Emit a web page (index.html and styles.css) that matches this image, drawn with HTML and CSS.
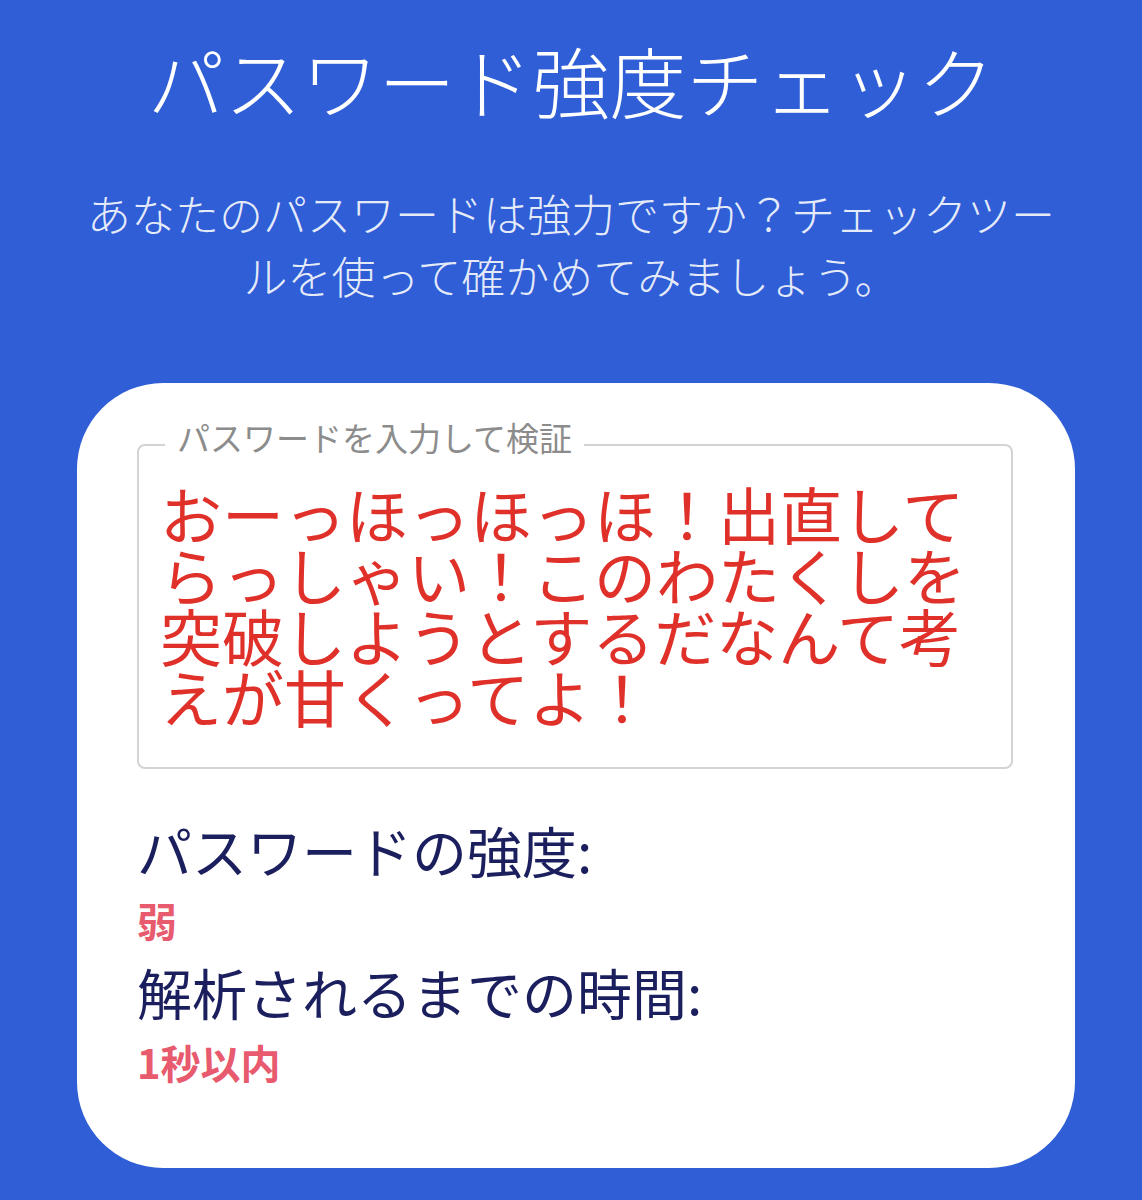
FILE: index.html
```html
<!DOCTYPE html>
<html lang="ja">
<head>
<meta charset="utf-8">
<title>パスワード強度チェック</title>
<link rel="stylesheet" href="styles.css">
</head>
<body>
<main class="page">
  <h1 class="title">パスワード強度チェック</h1>
  <p class="lead">あなたのパスワードは強力ですか？チェックツールを使って確かめてみましょう。</p>
  <section class="card">
    <fieldset class="field">
      <legend class="field-legend">パスワードを入力して検証</legend>
      <div class="field-value">おーっほっほっほ！出直してらっしゃい！このわたくしを突破しようとするだなんて考えが甘くってよ！</div>
    </fieldset>
    <div class="result">
      <div class="result-label">パスワードの強度:</div>
      <div class="result-value">弱</div>
      <div class="result-label">解析されるまでの時間:</div>
      <div class="result-value">1秒以内</div>
    </div>
  </section>
</main>
</body>
</html>
```

FILE: styles.css
```css
html, body {
  margin: 0;
  padding: 0;
  background: #2f5ed6;
}
body {
  font-family: "Noto Sans CJK JP", "Noto Sans", sans-serif;
  width: 1142px;
  height: 1200px;
  overflow: hidden;
}
.page {
  display: flex;
  flex-direction: column;
  align-items: center;
  padding-top: 34px;
}
.title {
  margin: 0;
  font-size: 77px;
  line-height: 92px;
  font-weight: 300;
  color: #ffffff;
  text-align: center;
}
.lead {
  margin: 56px 0 0;
  max-width: 1000px;
  font-size: 44px;
  line-height: 62px;
  font-weight: 300;
  color: rgba(255, 255, 255, 0.88);
  text-align: center;
}
.card {
  box-sizing: border-box;
  margin: 77px 0 0 10px;
  width: 998px;
  background: #ffffff;
  border-radius: 86px;
  padding: 34px 62px 71px 60px;
}
.field {
  margin: 0;
  border: 2px solid #d3d3d6;
  border-radius: 8px;
  padding: 0 21px 40px 21px;
  min-inline-size: 0;
}
.field-legend {
  padding: 0 12px 16px;
  margin-left: 5px;
  font-size: 33px;
  line-height: 40px;
  color: #8c8c8c;
}
.field-value {
  margin-top: 10px;
  font-size: 62px;
  line-height: 61px;
  color: #e0302a;
}
.result {
  margin-top: 44px;
  display: flex;
  flex-direction: column;
}
.result-label {
  font-size: 55px;
  line-height: 72px;
  color: #1b1f5e;
}
.result-value {
  font-size: 40px;
  line-height: 70px;
  font-weight: 700;
  color: #e85a6e;
}
```
